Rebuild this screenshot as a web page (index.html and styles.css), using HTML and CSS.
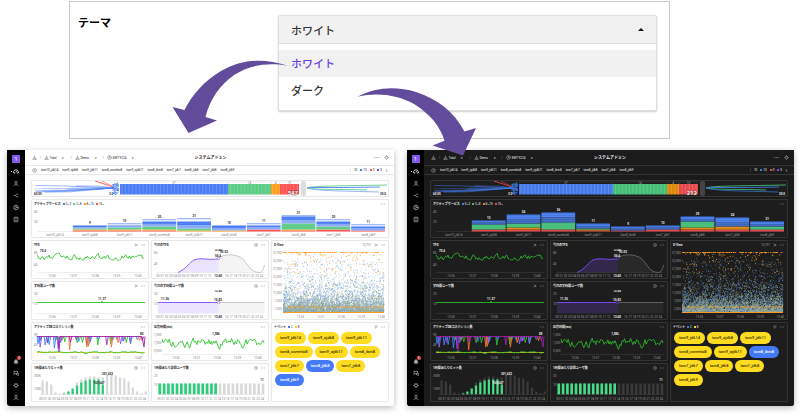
FILE: index.html
```html
<!DOCTYPE html>
<html lang="ja">
<head>
<meta charset="utf-8">
<title>テーマ</title>
<link rel="stylesheet" href="styles.css">
</head>
<body>
<main class="stage">
  <section class="settings">
    <label class="settings-label" for="theme">テーマ</label>
    <div class="dropdown">
      <div class="dropdown-head">
        <select id="theme" class="dropdown-select"><option>ホワイト</option><option>ダーク</option></select>
        <svg class="dropdown-caret" viewBox="0 0 6 3"><path d="M0 3L3 0L6 3z"/></svg>
      </div>
      <div class="dropdown-list">
        <button class="dropdown-option selected" type="button">ホワイト</button>
        <button class="dropdown-option" type="button">ダーク</button>
      </div>
    </div>
  </section>
  <div class="previews">
    <section class="dash light" id="light"></section>
    <section class="dash dark" id="dark"></section>
  </div>
  <svg class="arrows" viewBox="0 0 801 417" aria-hidden="true">
    <path d="M287 65.600C264 58 242 59 221 71C204 81 192 95 184.500 110L172.500 107L188.500 133L217 120.500L205.500 117C210 99 220 85 234 75C248 66 265 62 287 65.600z"/>
    <path d="M357.500 96.700C376 87 396 86 416 92C438 99 454 112 464.500 131.500L476 128L463 155.500L432.500 145.500L444.500 140.700C440 126 430 114 414 104C398 95 378 92 357.500 96.700z"/>
  </svg>
</main>
<script src="dashboard.js"></script>
</body>
</html>
```
FILE: styles.css
```css
* { box-sizing: border-box; }
body { margin: 0; background: #fff; font-family: Roboto, "Noto Sans CJK JP", sans-serif; }
button, select { font: inherit; color: inherit; border: 0; background: none; padding: 0; margin: 0; }
a { color: inherit; text-decoration: none; }
.stage { position: relative; padding: 1px 7px 12px; }
.arrows { position: absolute; left: 0; top: 0; width: 100%; fill: #634c9b; pointer-events: none; }

.settings { display: flex; align-items: flex-start; margin: 0 124px 0 62px; padding: 13px 12px 27px 8px; border: 1px solid #c8c8c8; font-family: "Noto Sans CJK JP", sans-serif; font-size: 11px; color: #333; }
.settings-label { flex: 0 0 200px; font-weight: 700; line-height: 14px; color: #000; }
.dropdown { flex: 1; border: 1px solid #dedede; border-radius: 2px; box-shadow: 0 1px 2px #ccc; background: #fff; }
.dropdown-head { display: flex; align-items: center; background: #f1f1f1; border-bottom: 1px solid #dcdcdc; padding: 0 12px; }
.dropdown-select { appearance: none; flex: 1; height: 27px; font-weight: 500; }
.dropdown-caret { width: 6px; height: 3px; fill: #111; }
.dropdown-list { padding: 6px 0; }
.dropdown-option { display: block; width: 100%; height: 27px; padding: 0 0 2px 12px; text-align: left; font-weight: 500; }
.dropdown-option.selected { background: #f1f1f1; color: #6a3fe0; }

.previews { display: grid; grid-template-columns: 1fr 1fr; gap: 13px; margin-top: 11px; }
.dash { display: flex; min-width: 0; border-radius: 0 0 3px 3px; overflow: hidden; background: var(--bg); color: var(--text); font-size: 3px; line-height: 4px; box-shadow: 0 2px 6px #0004; }
.light { --bg: #fff; --page: #fdfdfd; --panel: #fff; --line: #e9e9e9; --text: #222; --muted: #858585; --axis: #ddd; --bar: #d8d8d8; --area: #f4f4f4; --curve: #c4c4c4; --green: #2ec42e; --mint: #27cf78; --blue: #4a7cf5; --lightblue: #88aaf6; --go: #5ccc85; --orange: #ff9d1c; --red: #ff5252; --violet: #7c4dff; --glow: #ebe4ff; }
.dark { --bg: #1b1b1b; --page: #1a1a1a; --panel: #1d1d1d; --line: #343434; --text: #eee; --muted: #9a9a9a; --axis: #444; --bar: #3b3b3b; --area: #292929; --curve: #666; --green: #2bb52b; --mint: #45dd88; --blue: #447ae8; --lightblue: #3865bd; --go: #43bd75; --orange: #dc870a; --red: #e5484d; --violet: #7c4dff; --glow: #33284c; }

.rail { flex: 0 0 18px; display: flex; flex-direction: column; align-items: center; background: #000; padding: 5px 0; gap: 5px; }
.dark .rail { flex-basis: 17px; }
.rail-item { position: relative; display: block; width: 6px; height: 7px; color: #aaa; }
.rail-item svg { display: block; width: 6px; height: 7px; }
.rail-item.on { color: #fff; }
.rail-item.on::before { content: ""; position: absolute; left: -2px; top: 3px; width: 1px; height: 1px; background: #fff; }
.rail-logo { width: 8px; height: 8px; background: #8056f5; color: #fff; font-size: 6px; line-height: 8px; text-align: center; }
.rail-space { flex: 1; }
.rail-badge { position: absolute; right: -2px; top: -2px; width: 4px; height: 4px; border-radius: 2px; background: #f04a4a; color: #fff; font-size: 3px; line-height: 4px; text-align: center; }
.icon { display: block; flex: none; width: 5px; height: 5px; color: var(--muted); }
.icon, .rail-item svg { fill: none; stroke: currentColor; stroke-width: 1; }

.body { flex: 1; min-width: 0; background: var(--page); }
.top { display: grid; grid-template-columns: 1fr auto 1fr; align-items: center; height: 16px; padding: 0 5px 0 7px; background: var(--bg); border-bottom: 1px solid var(--line); }
.crumbs { display: flex; align-items: center; gap: 1px; color: var(--text); }
.crumb { display: flex; align-items: center; gap: 1px; }
.crumb-caret { margin: 0 3px 0 5px; }
.sep { color: var(--muted); margin: 0 2px; }
.top-title { margin: 0; font-size: 4px; line-height: 6px; font-weight: 700; }
.top-tools { display: flex; gap: 5px; justify-content: flex-end; align-items: center; color: var(--muted); }
.tabs { display: flex; align-items: center; height: 9px; padding: 0 2px 0 7px; border-bottom: 1px solid var(--line); background: var(--bg); }
.tab-list { display: flex; flex: 1; gap: 4px; margin-left: 4px; }
.counts { display: flex; gap: 3px; border-left: 1px solid var(--line); padding-left: 3px; padding-right: 4px; }
.key { display: inline-flex; align-items: center; gap: 1px; }
.key::before { content: ""; width: 2px; height: 2px; background: var(--blue); }
.key.g::before { background: var(--go); }
.key.o::before { background: var(--orange); }
.key.r::before { background: var(--red); }
.key.v::before { background: var(--violet); }
.key.y::before { background: #fbd51c; }

.grid { display: grid; grid-template-columns: repeat(3, 1fr); gap: 2px; padding: 5px 5px 4px 6px; }
.dark .grid { padding-right: 6px; }
.panel { min-width: 0; border: 1px solid var(--line); border-radius: 1px; background: var(--panel); }
.wide { grid-column: span 3; }
.tall { grid-row: span 2; }
.panel-head { display: flex; align-items: center; gap: 2px; height: 8px; padding: 0 3px 0 2px; }
.panel-title { margin: 0; font-size: 3px; line-height: 4px; font-weight: 700; white-space: nowrap; }
.panel-tools { display: flex; gap: 3px; align-items: center; margin-left: auto; color: var(--muted); }
.panel-tools .icon { width: 4px; height: 4px; }
.plot { display: block; width: 100%; }
.plot text { font-size: 3px; fill: var(--muted); }
.plot .val { fill: var(--text); font-weight: 700; }
.plot .mid { text-anchor: middle; }
.plot .total { font-size: 6px; font-weight: 700; fill: #fff; text-anchor: end; stroke: #0006; stroke-width: 1; paint-order: stroke; }
.axis { stroke: var(--axis); stroke-width: .5; fill: none; }
.curve { fill: none; stroke-width: .9; }
.stream { stroke-width: .6; }
.events { display: flex; flex-wrap: wrap; gap: 2px; list-style: none; margin: 0; padding: 1px 3px 0 3px; }
.event { height: 12px; line-height: 12px; border-radius: 6px; padding: 0 5px; font-size: 4px; font-weight: 500; background: #ffdc20; color: #382f00; }
.event.info { background: #447af8; color: #fff; }
```
FILE: dashboard.js
```js
const NAMES = ['tom10_jdk14', 'tom9_ojdk8', 'tom9_jdk11', 'tom8_corretto8', 'tom9_ojdk11', 'tom8_ibm8', 'tom7_jdk7', 'tom8_jdk8', 'tom7_jdk8', 'tom8_jdk9'];

const THEMES = {
  light: {
    user: 70, total: '547', heat: [88, 196, 239, 248, 267],
    blueEvents: [7, 9],
    stacks: [[0, 0, 0, 0, 0, ''], [1, 1, 1, 3, 0, '9'], [1, 1, 2, 2, 2, '15'], [1, 1, 3, 5, 2, '20'], [0, 1, 2, 7, 3, '21'], [0, 1, 0, 5, 0, '10'], [2, 0, 0, 4, 2, '11'], [1, 1, 6, 7, 1, '31'], [2, 0, 3, 5, 2, '20'], [1, 0, 0, 4, 2, '11']]
  },
  dark: {
    user: 60, total: '212', heat: [88, 182, 236, 248, 267],
    blueEvents: [5],
    stacks: [[0, 0, 0, 0, 0, ''], [2, 0, 5, 4, 0, '15'], [2, 2, 4, 9, 0, '24'], [2, 0, 7, 10, 0, '26'], [1, 1, 1, 5, 0, '11'], [1, 0, 0, 4, 0, '9'], [2, 0, 0, 4, 0, '10'], [2, 2, 6, 5, 0, '29'], [2, 3, 0, 9, 0, '24'], [2, 0, 3, 5, 0, '21']]
  }
};

function random(seed) {
  let s = seed;
  return () => (s = (s * 16807) % 2147483647) / 2147483647;
}

const text = (x, y, s, c = '') => `<text x="${x}" y="${y}" class="${c}">${s}</text>`;
const rect = (x, y, w, h, f) => `<rect x="${x}" y="${y}" width="${w}" height="${h}" fill="var(--${f})"/>`;
const path = (d, color) => `<path class="curve" style="stroke:var(--${color})" d="${d}"/>`;
const svg = (w, h, inner) => `<svg class="plot" viewBox="0 0 ${w} ${h}">${inner}</svg>`;

const ICONS = {
  home: '<path d="M1 6.500V4L4 1.500L7 4V6.500M3 6.500V4.500H5V6.500"/>',
  tree: '<path d="M4 1V3M1 7L4 3L7 7zM2.500 5H5.500"/>',
  user: '<circle cx="4" cy="2.500" r="1.500"/><path d="M1 7C1 5 7 5 7 7"/>',
  share: '<path d="M1 4H3L5 2H7M3 4L5 6H7"/>',
  pie: '<circle cx="4" cy="4" r="3"/><path d="M4 1V4H7M4 4L2 6"/>',
  doc: '<path d="M1.500 1H6.500V7H1.500zM3 3H5M3 5H5"/>',
  gauge: '<path d="M1 6A3.200 3.200 0 1 1 7 6H5M4 5L5 3M1 6H3"/>',
  bell: '<path fill="currentColor" d="M1.500 6C2.500 4 2 1.500 4 1.500S5.500 4 6.500 6z"/><path d="M3 7H5"/>',
  chat: '<path d="M1 1H6V4H3L1.500 5.500V1M4 5.500H5.500L7 7V3"/>',
  gear: '<circle cx="4" cy="4" r="2"/><path d="M4 .5V2M4 6V7.500M.5 4H2M6 4H7.500M1.500 1.500L2.500 2.500M6.500 1.500L5.500 2.500M1.500 6.500L2.500 5.500M6.500 6.500L5.500 5.500"/>',
  info: '<circle cx="4" cy="4" r="3"/><path d="M4 2V4.500H5.500"/>',
  play: '<path d="M1 1.500L6 4L1 6.500M3 4H7"/>',
  dots: '<path d="M0 4H8" stroke-dasharray="2 1"/>',
  list: '<path d="M1 2H7M1 4H7M1 6H5"/>'
};
const icon = n => `<svg class="icon" viewBox="0 0 8 8">${ICONS[n]}</svg>`;

const TIMES = ['13:36', '13:37', '13:38', '13:39', '13:40'];
const minutes = (start, step, y) => TIMES.map((t, i) => text(start + step * i, y, t, 'mid')).join('');
const hours = (x0, y, now) => Array.from({ length: 25 }, (_, i) => {
  if (now && i === 14) return text(x0 + i * 4.3, y, '13:40', 'val mid');
  if (now && (i === 13 || i === 15)) return '';
  return text(x0 + i * 4.3, y, String(i).padStart(2, '0'), 'mid');
}).join('');

function panel(title, tools, content, cls = '', extra = '') {
  return `<article class="panel ${cls}"><header class="panel-head"><h3 class="panel-title">${title}</h3>${extra}<div class="panel-tools">${tools}</div></header>${content}</article>`;
}

function noise(seed, x0, x1, y, amp) {
  const r = random(seed);
  let d = '', v = 0;
  for (let x = x0; x <= x1; x += 1.2) {
    v = v * 0.6 + (r() - 0.5) * amp;
    d += `${d ? 'L' : 'M'}${x.toFixed(1)} ${(y + v).toFixed(1)}`;
  }
  return d;
}

function heatMap(t) {
  const [a, b, c, d, e] = t.heat;
  const r = random(31);
  let s = '';
  for (let i = 0; i < 12; i++) {
    const y = 4.5 + r() * 7, x = r() * 45;
    s += `<path class="stream" fill="none" opacity="${i % 2 ? .4 : .9}" style="stroke:var(--blue)" d="M${x} ${y}L${x + 25} ${y * .9 + .8}L82 7"/>`;
  }
  s += path('M63 0L80 5.500', 'red') + '<path class="stream" fill="none" style="stroke:var(--red)" d="M70 0L82 6"/>';
  for (let i = 0; i < 60; i++) s += rect(80 + r() * 6, 1 + r() * 12, 1.2, 1.2, r() > .5 ? 'blue' : 'lightblue');
  [[a, b, 'blue'], [b, c, 'go'], [c, d, 'orange'], [d, e, 'red']].forEach(([x, x2, f]) => {
    s += rect(x, 3, x2 - x, 10.5, f);
    s += `<path class="axis" d="M${x + .5} 2.500V1H${x2 - .5}V2.500"/>`;
  });
  for (let x = a + 2; x < e; x += 3.5) s += `<path d="M${x} 3V13.500" stroke="#fff" stroke-opacity=".2" stroke-width=".8"/>`;
  s += text((a + b) / 2, 2.5, '37', 'mid') + text((b + c) / 2, 2.5, '14', 'mid') + text((c + d) / 2, 2.5, '4', 'mid') + text((d + e) / 2, 2.5, '10', 'mid');
  s += `<rect x="269" y="0" width="5" height="15" rx="2" fill="var(--axis)"/>`;
  s += path('M275 7C280 5 300 5 355 4', 'go') + path('M275 7C285 6 300 7 348 6', 'blue');
  s += path('M275 7C285 9 310 8 335 9', 'go') + path('M275 7C285 10 310 10 347 11', 'lightblue');
  s += text(2, 14, '60.05', 'val') + text(77, 14, '3.0', 'val') + text(348, 14, '30.0', 'val');
  s += text(e - 1, 14, t.total, 'total');
  return `<article class="panel wide">${svg(356, 15, s)}</article>`;
}

function services(t) {
  let s = text(2, 5, '40') + text(2, 14.5, '20') + '<path class="axis" d="M6 23.500H352"/>';
  t.stacks.forEach(([red, orange, green, blue, gap, label], i) => {
    const x = 6 + i * 34.8;
    let y = 23.5;
    [[red, 'red'], [orange, 'orange'], [green, 'go'], [blue / 2, 'lightblue'], [blue / 2, 'blue']].forEach(([h, f]) => {
      y -= h;
      if (h) s += rect(x, y, 33.8, h, f);
    });
    for (let k = y + 2; k < 22; k += 2) s += `<path d="M${x} ${k}h33.800" stroke="#fff" stroke-opacity=".12" stroke-width=".6"/>`;
    if (gap) { y -= gap; s += rect(x, y, 33.8, .7, 'blue'); }
    if (label) s += text(x + 17, y - 1.5, label, 'val mid');
    s += text(x + 17, 28, NAMES[i], 'mid');
  });
  const keys = '<span class="key">0~3</span><span class="key g">3~8</span><span class="key o">8~15</span><span class="key r">15~</span>';
  return panel('アクティブサービス', icon('dots'), svg(356, 29, s), 'wide', keys);
}

function xview() {
  const r = random(77);
  const colors = ['#5684ef', '#6f9fd0', '#5fa88a', '#7f93ad', '#8fb4e8', '#b8b465'];
  const groups = colors.map(() => '');
  for (let i = 0; i < 5600; i++) {
    const x = Math.floor(r() * 202) / 2 + 11;
    const burst = 7 + 4 * Math.abs(Math.sin(x * 1.7) * Math.sin(x * .43));
    const h = i < 560 ? r() * 52 : -Math.log(1 - r()) * burst;
    if (h < 56) groups[Math.floor(r() * 6)] += `M${x} ${(63 - h).toFixed(1)}h.7`;
  }
  let s = groups.map((d, i) => `<path d="${d}" stroke="${colors[i]}" stroke-width=".7"/>`).join('');
  let hot = '';
  for (let i = 0; i < 220; i++) hot += `M${(11 + r() * 100).toFixed(1)} ${(i < 130 ? 3.5 : 4 + r() * r() * 30).toFixed(1)}h1`;
  for (let i = 0; i < 90; i++) hot += `M${(11 + r() * 100).toFixed(1)} 58h1`;
  s += `<path d="${hot}" stroke="#ff9d2b" stroke-width=".8"/><path d="M11 63.500H112" stroke="#f59a23"/>`;
  ['37,500', '32,500', '27,500', '22,500', '17,500', '12,500', '7,500', '2,500'].forEach((v, i) => {
    s += `<text x="10" y="${4.5 + i * 8.1}" text-anchor="end">${v}</text>`;
  });
  return panel('X-View', `<span>10,757</span>${icon('play')}${icon('dots')}`, svg(116, 70, s + minutes(28.500, 20.2, 68.5)), 'tall');
}

function connections() {
  const r = random(15);
  const colors = ['#3c82f0', '#f0742b', '#2bc42b', '#8a5cf5', '#9c27b0', '#3c82f0'];
  let s = '';
  for (let i = 0; i < 46; i++) {
    const x = 5 + r() * 105, h = 3 + r() * r() * 13;
    s += `<path class="curve" stroke="${colors[i % 6]}" d="M${x} 5.500l1 ${h}l.6 ${-h * .4}l1 ${-h * .6}"/>`;
  }
  s += '<path class="curve" stroke="#9c1fa8" d="M5 5.500H26L27 21L28 5.500H110L112 16L113 5.500"/>';
  s += `<path class="curve" stroke="#e5c51e" d="M5 21.500H113"/>` + path(noise(8, 5, 113, 21.5, 1.2), 'green');
  s += text(2, 4.5, '90') + text(2, 15, '45') + text(108, 4, '80', 'val') + minutes(20, 21.5, 27.5);
  return panel('アクティブDBコネクション数', icon('dots'), svg(116, 29, s));
}

function bars(list, x0, width, base) {
  return list.map(([grey, green], i) => {
    const x = x0 + i * 4.3;
    return rect(x, base - grey, width, grey, 'bar') + (green ? rect(x, base - green, width, green, 'mint') : '');
  }).join('');
}

function dashboard(t) {
  const tps = svg(116, 29, text(2, 4.5, '80') + text(2, 17, '40') + '<path class="axis" d="M5 23.500H113"/>' +
    path(noise(21, 5, 113, 8.3, 5), 'green') + text(11, 3, '70.4', 'val mid') + minutes(20, 21.5, 28));
  const nowLine = '<path class="axis" d="M66.500 2V23.500" stroke-dasharray="1 1"/>';
  const today = svg(116, 29, text(2, 4.5, '80') + text(2, 15.5, '40') +
    '<path fill="var(--glow)" d="M26 23.500C34 20 38 13 42 11C50 8 58 12 66.500 9.500V23.500z"/><path fill="var(--area)" d="M66.500 9.500C72 4 85 5 91 10C97 17 99 23 107 23.500H66.500z"/>' +
    '<path class="axis" d="M5 23.500H112"/>' + nowLine +
    path('M26 23.500C34 20 38 13 42 11C50 8 58 12 66.500 9.500', 'violet') +
    path('M66.500 9.500C72 4 85 5 91 10C97 17 99 23 107 23.500Q111 24 112.500 16', 'curve') +
    '<circle cx="66.500" cy="9.500" r="1.200" fill="var(--panel)" stroke="var(--violet)" stroke-width=".6"/>' +
    text(66, 1.5, '13:40', 'val mid') + text(72, 4, '92.03', 'val mid') + text(66, 8, '56.4', 'val mid') + hours(6, 28, true));
  const users = svg(116, 29, text(2, 4.5, '20') + text(2, 14.5, '10') + '<path class="axis" d="M5 23.500H113"/>' +
    path('M5 12.500H113', 'green') + `<circle cx="${t.user}" cy="12" r=".9" fill="var(--green)"/>` + text(t.user, 10, '11.37', 'val mid') + minutes(20, 21.5, 28));
  const todayUsers = svg(116, 29, text(2, 4.5, '20') + text(2, 14.5, '10') + rect(6, 12.5, 60.5, 11, 'glow') + rect(66.5, 12.5, 46, 11, 'area') +
    nowLine + path('M6 12.500H66.500', 'violet') + path('M66.500 12.500H112.500', 'curve') +
    '<circle cx="66.500" cy="12.500" r="1.200" fill="var(--panel)" stroke="var(--violet)" stroke-width=".6"/>' +
    text(13, 10, '11.26', 'val mid') + text(66, 10.500, '10.83', 'val mid') + text(66, 1.5, '13:40', 'val mid') + hours(6, 28, true));
  const response = svg(116, 29, text(2, 4.5, '1,500') + text(2, 12.5, '1,000') + text(2, 20.5, '0,500') + '<path class="axis" d="M10 23.500H113"/>' +
    path(noise(44, 10, 113, 12, 8), 'green') + text(64, 3.500, '1,086', 'val mid') + minutes(24, 20.5, 27.5));
  const hitData = [[14, 0], [13, 0], [10, 0], [2, 0], [1, 0], [2, 1], [3, 3], [6, 6], [12, 9], [15, 12], [17, 14], [18, 15], [18, 15], [17, 15], [17, 10], [19, 0], [20, 0], [19, 0], [17, 0], [16, 0], [13, 0], [7, 0], [3, 0], [1, 0], [3, 0]];
  const hits = svg(116, 29, text(2, 4.500, '300K') + text(2, 17.5, '150K') + bars(hitData, 9.5, 2.2, 22.5) + '<path class="axis" d="M8 22.500H113"/>' +
    text(75.5, 2.5, '301,423', 'val mid') + text(67, 12, '163,647', 'val mid') + hours(9, 27.5));
  const same = Array.from({ length: 25 }, (_, i) => i < 14 ? [11, 11] : [11, 0]);
  const concurrent = svg(116, 29, text(2, 4.500, '20') + text(2, 14, '10') + bars(same, 6.5, 2.6, 22.5) + '<path class="axis" d="M5 22.500H113"/>' +
    text(110, 9, '11', 'val mid') + hours(7, 27.5));
  const order = ['tom9_jdk14', ...NAMES.slice(1)];
  const events = `<ul class="events">${order.map((n, i) => `<li class="event${t.blueEvents.includes(i) ? ' info' : ''}">${n}</li>`).join('')}</ul>`;
  const rail = (n, label, cls = '', more = '') => `<button type="button" class="rail-item ${cls}" aria-label="${label}"><svg viewBox="0 0 8 8">${ICONS[n]}</svg>${more}</button>`;

  return `<nav class="rail"><a class="rail-logo" href="#">1</a>
    ${rail('gauge', 'ダッシュボード', 'on')}${rail('user', '分析')}${rail('share', '統計')}${rail('pie', 'レポート')}${rail('doc', '文書')}
    <span class="rail-space"></span>
    ${rail('bell', '通知', '', '<span class="rail-badge">1</span>')}${rail('chat', 'チャット')}${rail('gear', '設定')}${rail('user', 'ユーザー')}</nav>
  <div class="body">
    <header class="top"><div class="crumbs">${icon('tree')}<span class="sep">|</span><a class="crumb" href="#">${icon('tree')}Total</a><span class="crumb-caret">▾</span><span class="sep">/</span><a class="crumb" href="#">${icon('tree')}Demo</a><span class="crumb-caret">▾</span><span class="sep">/</span><a class="crumb" href="#">${icon('pie')}EMT 9224</a><span class="crumb-caret">▾</span></div>
      <h2 class="top-title">システムアドミン</h2><div class="top-tools">${icon('dots')}${icon('gear')}</div></header>
    <div class="tabs">${icon('info')}<div class="tab-list">${NAMES.map(n => `<a href="#">${n}</a>`).join('')}</div>
      <div class="counts"><span>10</span><span class="key">10</span><span class="key r">0</span><span class="key v">0</span><span>⋮</span></div></div>
    <div class="grid">
      ${heatMap(t)}${services(t)}
      ${panel('TPS', icon('play') + icon('dots'), tps)}${panel('今日のTPS', icon('info') + icon('dots'), today)}${xview()}
      ${panel('実時間ユーザ数', icon('play') + icon('dots'), users)}${panel('今日の実時間ユーザ数', icon('info') + icon('dots'), todayUsers)}
      ${connections()}${panel('応答時間(ms)', icon('dots'), response)}
      ${panel('イベント', icon('list') + icon('dots'), events, 'tall', '<span class="key">2</span><span class="key y">8</span>')}
      ${panel('1時間あたりヒット数', icon('info') + icon('dots'), hits)}${panel('1時間あたり訪問ユーザ数', icon('info') + icon('dots'), concurrent)}
    </div>
  </div>`;
}

Object.keys(THEMES).forEach(id => {
  document.getElementById(id).innerHTML = dashboard(THEMES[id]);
});
```
